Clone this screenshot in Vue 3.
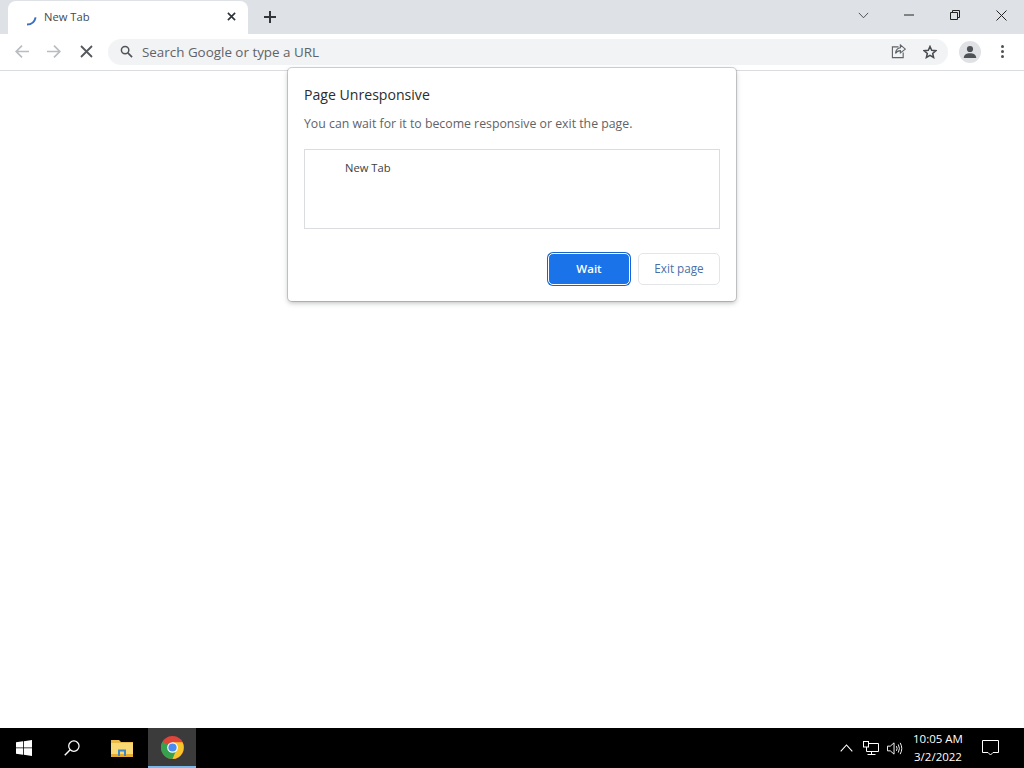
<script setup>
const title = 'Page Unresponsive'
</script>

<template>
  <div class="screen">
    <header class="tabstrip">
      <div class="tab">
        <svg class="spinner" width="16" height="16" viewBox="0 0 16 16"><path d="M5 14.6 C9 14.6 12.6 12.2 13.6 7.4" fill="none" stroke="#3b6fc0" stroke-width="2"/></svg>
        <span class="tab-title">New Tab</span>
        <svg class="tab-close" width="9" height="9" viewBox="0 0 10 10"><path d="M1 1 L9 9 M9 1 L1 9" stroke="#2f3337" stroke-width="1.8"/></svg>
      </div>
      <svg class="plus" width="12" height="12" viewBox="0 0 12 12"><path d="M6 0 V12 M0 6 H12" stroke="#32363a" stroke-width="2"/></svg>
      <div class="winctl">
        <span class="wbtn"><svg width="11" height="7" viewBox="0 0 12 8"><path d="M.7 1 L6 6.6 L11.3 1" fill="none" stroke="#3c4043" stroke-width="1"/></svg></span>
        <span class="wbtn"><svg width="10" height="2" viewBox="0 0 10 2"><path d="M0 1 H10" stroke="#222" stroke-width="1"/></svg></span>
        <span class="wbtn"><svg width="10" height="10" viewBox="0 0 10 10"><path d="M.5 2.5 H7.5 V9.5 H.5 Z M2.5 2.5 V.5 H9.5 V7.5 H7.5" fill="none" stroke="#222" stroke-width="1"/></svg></span>
        <span class="wbtn"><svg width="11" height="11" viewBox="0 0 11 11"><path d="M.5 .5 L10.5 10.5 M10.5 .5 L.5 10.5" stroke="#222" stroke-width="1"/></svg></span>
      </div>
    </header>

    <nav class="toolbar">
      <svg class="nav" width="14" height="13" viewBox="0 0 14 13"><path d="M14 6.5 H1.5 M7 .7 L1.2 6.5 L7 12.3" fill="none" stroke="#b9bcc0" stroke-width="1.7"/></svg>
      <svg class="nav fwd" width="14" height="13" viewBox="0 0 14 13"><path d="M0 6.5 H12.5 M7 .7 L12.8 6.5 L7 12.3" fill="none" stroke="#b9bcc0" stroke-width="1.7"/></svg>
      <svg class="nav stop" width="13" height="13" viewBox="0 0 13 13"><path d="M1 1 L12 12 M12 1 L1 12" stroke="#55585c" stroke-width="1.8"/></svg>
      <div class="omnibox">
        <svg width="13" height="13" viewBox="0 0 14 14"><circle cx="5.5" cy="5.5" r="4" fill="none" stroke="#505458" stroke-width="1.6"/><path d="M8.5 8.5 L13 13" stroke="#505458" stroke-width="1.8"/></svg>
        <span class="placeholder">Search Google or type a URL</span>
        <svg class="share" width="15" height="15" viewBox="0 0 16 16"><path d="M8 3 H1.5 V14.5 H13 V9" fill="none" stroke="#5f6368" stroke-width="1.2"/><path d="M10 1 L15.3 5.5 L10 9.5 V7 C7.5 7 6 8 4.8 10 C5.2 6.5 7 4.3 10 4 Z" fill="none" stroke="#5f6368" stroke-width="1.2"/></svg>
        <svg class="star" width="14" height="14" viewBox="0 0 24 24"><path d="M12 2.5 L14.9 9 L22 9.7 L16.6 14.4 L18.2 21.4 L12 17.7 L5.8 21.4 L7.4 14.4 L2 9.7 L9.1 9 Z" fill="none" stroke="#484c50" stroke-width="2.6"/></svg>
      </div>
      <span class="avatar"><svg width="14" height="14" viewBox="0 0 14 14"><circle cx="7" cy="4" r="3.1" fill="#4e5257"/><path d="M0.8 13 C0.8 9.6 3.8 8.2 7 8.2 C10.2 8.2 13.2 9.6 13.2 13 Z" fill="#4e5257"/></svg></span>
      <span class="kebab"><i></i><i></i><i></i></span>
    </nav>

    <main class="page"></main>

    <footer class="taskbar">
      <span class="tb-btn">
        <svg width="16" height="16" viewBox="0 0 16 16" fill="#fff"><path d="M0 2.3 L7 1.3 V7.5 H0 Z M7.8 1.2 L16 0 V7.5 H7.8 Z M0 8.3 H7 V14.7 L0 13.7 Z M7.8 8.3 H16 V16 L7.8 14.8 Z"/></svg>
      </span>
      <span class="tb-btn">
        <svg width="16" height="16" viewBox="0 0 17 17"><circle cx="10.5" cy="6.5" r="5.5" fill="none" stroke="#fff" stroke-width="1.3"/><path d="M6.6 10.4 L.8 16.2" stroke="#fff" stroke-width="1.5"/></svg>
      </span>
      <span class="tb-btn">
        <svg width="22" height="18" viewBox="0 0 22 18"><path d="M0 1 H8 L10 3 H22 V6 H0 Z" fill="#e9b949"/><rect y="4" width="22" height="14" fill="#f8d775"/><rect x="0" y="15" width="22" height="3" fill="#e3ab32"/><path d="M7 17 V10.5 H15 V17 H13 V12.5 H9 V17 Z" fill="#3f86c6"/></svg>
      </span>
      <span class="tb-btn chrome">
        <svg width="23" height="23" viewBox="0 0 24 24">
          <circle cx="12" cy="12" r="12" fill="#e0453a"/>
          <path d="M12 12 L1.6 6 A12 12 0 0 0 12 24 L18 13.6 Z" fill="#36a24e"/>
          <path d="M12 6.5 H22.4 A12 12 0 0 1 12 24 L17 12 Z" fill="#f7c52b"/>
          <circle cx="12" cy="12" r="5.6" fill="#fff"/>
          <circle cx="12" cy="12" r="4.3" fill="#4b8bf0"/>
        </svg>
      </span>
      <div class="tray">
        <svg width="13" height="8" viewBox="0 0 13 8"><path d="M.7 7.3 L6.5 1 L12.3 7.3" fill="none" stroke="#fff" stroke-width="1.1"/></svg>
        <svg class="net" width="16" height="14" viewBox="0 0 16 14"><path d="M5.5 2.5 H15.5 V10.5 H3.5 V6 M8.5 10.5 V13.5 M4.5 13.5 H12.5" fill="none" stroke="#fff" stroke-width="1"/><rect x=".5" y=".5" width="5" height="5.5" fill="#000" stroke="#fff"/></svg>
        <svg width="16" height="15" viewBox="0 0 17 15"><path d="M.5 5 H3.5 L7.5 1.5 V13.5 L3.5 10 H.5 Z M10 5 Q11.5 7.5 10 10 M12 3.2 Q14.4 7.5 12 11.8 M14 1.5 Q17.4 7.5 14 13.5" fill="none" stroke="#fff" stroke-width="1"/></svg>
        <div class="clock"><span>10:05 AM</span><span>3/2/2022</span></div>
        <svg class="notif" width="17" height="16" viewBox="0 0 17 16"><path d="M.5 .5 H16.5 V12.5 H11 L8.5 15 L6 12.5 H.5 Z" fill="none" stroke="#fff" stroke-width="1"/></svg>
      </div>
    </footer>

    <section class="dialog">
      <h1>{{ title }}</h1>
      <p>You can wait for it to become responsive or exit the page.</p>
      <div class="list"><span>New Tab</span></div>
      <div class="actions">
        <button class="primary">Wait</button>
        <button class="secondary">Exit page</button>
      </div>
    </section>
  </div>
</template>

<style>
html, body { margin: 0; background: #fff; }
</style>

<style scoped>
.screen {
  position: relative;
  width: 1024px;
  height: 768px;
  display: flex;
  flex-direction: column;
  overflow: hidden;
  font-family: "Open Sans", "Noto Sans", sans-serif;
  background: #fff;
}
.tabstrip {
  height: 34px;
  flex: none;
  display: flex;
  align-items: center;
  background: #dee1e6;
  padding-left: 8px;
  box-sizing: border-box;
}
.tab {
  width: 240px;
  height: 34px;
  margin-top: 1px;
  box-sizing: border-box;
  background: #fff;
  border-radius: 8px 8px 0 0;
  display: flex;
  align-items: center;
  padding: 0 12px 2px 14px;
}
.spinner { margin-top: 2px; }
.tab-title {
  margin-left: 6px;
  font-size: 11.2px;
  color: #45494d;
  flex: 1;
}
.plus { margin-left: 16px; }
.winctl { margin-left: auto; display: flex; align-items: center; height: 28px; margin-top: -4px; }
.wbtn { width: 46px; display: flex; justify-content: center; align-items: center; }
.toolbar {
  height: 37px;
  flex: none;
  box-sizing: border-box;
  border-bottom: 1px solid #dadce0;
  display: flex;
  align-items: center;
  padding: 0 0 1px 15px;
  background: #fff;
}
.nav { flex: none; }
.fwd { margin-left: 18px; }
.stop { margin-left: 19px; }
.omnibox {
  margin-left: 15px;
  width: 840px;
  height: 26px;
  flex: none;
  box-sizing: border-box;
  border-radius: 13px;
  background: #f1f3f4;
  display: flex;
  align-items: center;
  padding: 0 11px 0 12px;
}
.placeholder {
  margin-left: 9px;
  font-size: 13.4px;
  color: #5f6368;
  flex: 1;
}
.star { margin-left: 17px; }
.avatar {
  margin-left: 11px;
  width: 22px;
  height: 22px;
  border-radius: 50%;
  background: #dfe1e5;
  display: flex;
  justify-content: center;
  align-items: center;
  flex: none;
}
.kebab {
  margin-left: 20px;
  display: flex;
  flex-direction: column;
  gap: 2px;
}
.kebab i {
  width: 3px;
  height: 3px;
  border-radius: 50%;
  background: #4e5257;
}
.page { flex: 1; background: #fff; }
.taskbar {
  height: 40px;
  flex: none;
  background: #000;
  display: flex;
  align-items: stretch;
}
.tb-btn {
  width: 48px;
  display: flex;
  align-items: center;
  justify-content: center;
  box-sizing: border-box;
}
.tb-btn:nth-child(3) { width: 52px; }
.chrome {
  background: #3b3b3b;
  border-bottom: 2px solid #76b9ed;
}
.tray {
  margin-left: auto;
  display: flex;
  align-items: center;
  color: #fff;
  padding-right: 25px;
}
.tray svg { margin-left: 8px; }
.tray svg:first-child { margin-left: 0; }
.tray .net { margin-left: 10px; }
.clock {
  width: 54px;
  margin-left: 8px;
  display: flex;
  flex-direction: column;
  align-items: center;
  font-size: 11.5px;
  line-height: 18px;
  margin-top: -1px;
}
.tray .notif { margin-left: 17px; }
.dialog {
  position: absolute;
  left: 288px;
  top: 68px;
  width: 448px;
  height: 233px;
  box-sizing: border-box;
  background: #fff;
  border-radius: 4px;
  box-shadow: 0 0 0 1px rgba(60, 64, 67, .22), 0 2px 5px rgba(60, 64, 67, .35);
  padding: 17px 16px 16px;
  display: flex;
  flex-direction: column;
}
.dialog h1 {
  margin: 0;
  font-size: 14.1px;
  font-weight: 400;
  line-height: 20px;
  color: #2b2d30;
}
.dialog p {
  margin: 9px 0 0;
  font-size: 12.3px;
  line-height: 20px;
  color: #5f6368;
}
.list {
  margin-top: 15px;
  height: 80px;
  box-sizing: border-box;
  border: 1px solid #dadce0;
  padding: 10px 0 0 40px;
  font-size: 11.2px;
  line-height: 16px;
  color: #3c4043;
}
.actions {
  margin-top: 24px;
  display: flex;
  justify-content: flex-end;
  gap: 8px;
}
button {
  height: 32px;
  box-sizing: border-box;
  border-radius: 5px;
  font-family: inherit;
  font-size: 11.5px;
  padding: 0 0 2px;
}
.primary {
  width: 82px;
  background: #1a73e8;
  color: #fff;
  font-weight: 600;
  border: 1px solid #fff;
  box-shadow: 0 0 0 1px #1765c9;
}
.secondary {
  width: 82px;
  background: #fff;
  color: #4a6fa8;
  font-weight: 500;
  font-size: 11.7px;
  border: 1px solid #e3e5e8;
}
</style>
